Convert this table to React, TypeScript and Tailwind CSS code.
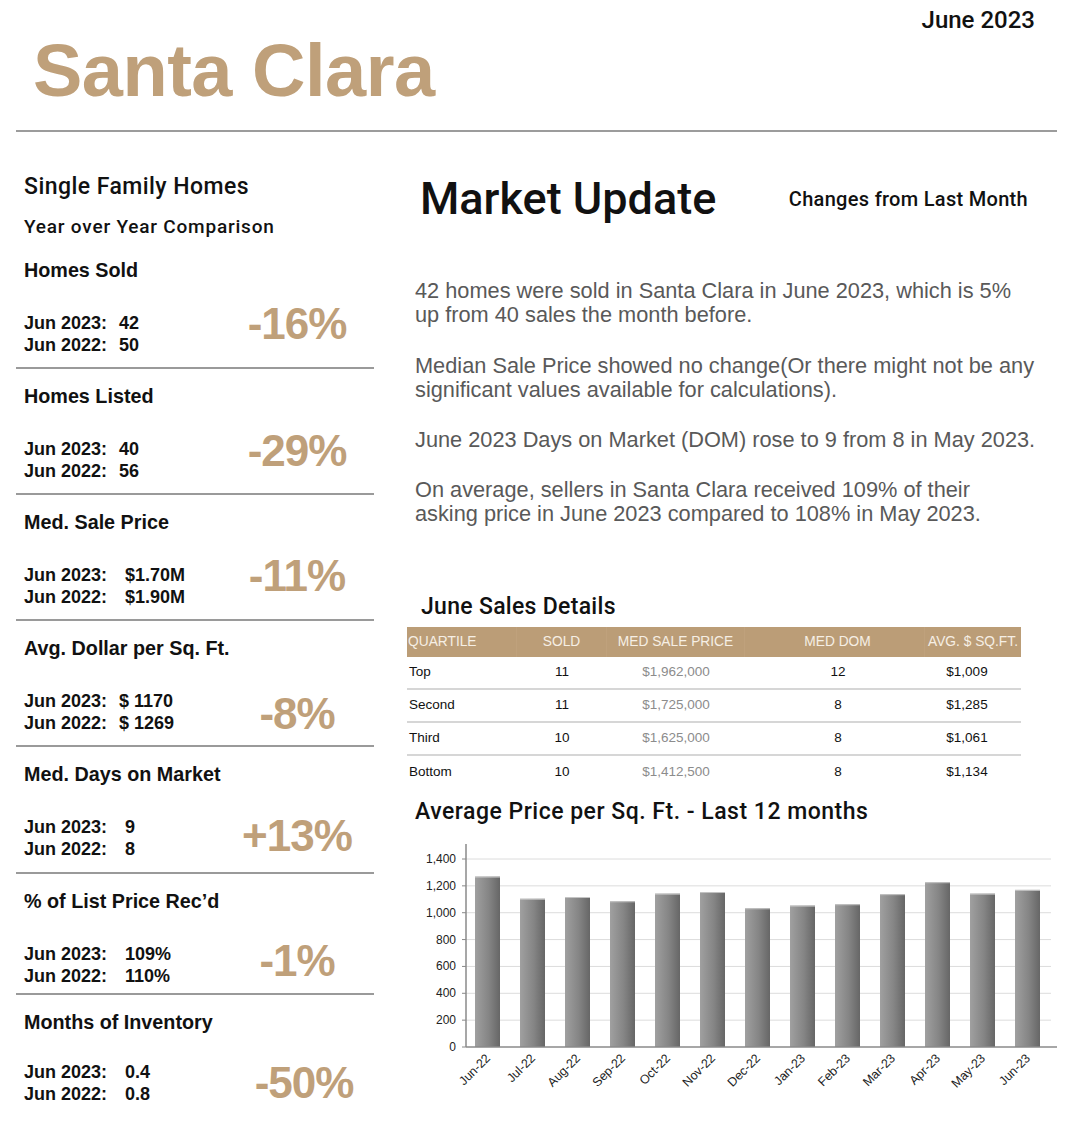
import React from 'react';

const tan = 'text-[#bfa07a]';

const stats = [
  { title: 'Homes Sold', a: '42', b: '50', pct: '-16%', wide: false, box: 'h-[126px] border-b-2', gap: 'mt-[29px]', shift: '-translate-y-[10px]' },
  { title: 'Homes Listed', a: '40', b: '56', pct: '-29%', wide: false, box: 'h-[126px] border-b-2', gap: 'mt-[29px]', shift: '-translate-y-[9px]' },
  { title: 'Med. Sale Price', a: '$1.70M', b: '$1.90M', pct: '-11%', wide: true, box: 'h-[126px] border-b-2', gap: 'mt-[29px]', shift: '-translate-y-[10px]' },
  { title: 'Avg. Dollar per Sq. Ft.', a: '$ 1170', b: '$ 1269', pct: '-8%', wide: false, box: 'h-[126px] border-b-2', gap: 'mt-[29px]', shift: 'translate-y-[2px]' },
  { title: 'Med. Days on Market', a: '9', b: '8', pct: '+13%', wide: true, box: 'h-[127px] border-b-2', gap: 'mt-[29px]', shift: '-translate-y-[2px]' },
  { title: '% of List Price Rec\u2019d', a: '109%', b: '110%', pct: '-1%', wide: true, box: 'h-[121px] border-b-2', gap: 'mt-[29px]', shift: '-translate-y-[4px]' },
  { title: 'Months of Inventory', a: '0.4', b: '0.8', pct: '-50%', wide: true, box: '', gap: 'mt-[26px]', shift: 'translate-x-[7px]' },
];

const quartiles = [
  { name: 'Top', sold: '11', price: '$1,962,000', dom: '12', sqft: '$1,009' },
  { name: 'Second', sold: '11', price: '$1,725,000', dom: '8', sqft: '$1,285' },
  { name: 'Third', sold: '10', price: '$1,625,000', dom: '8', sqft: '$1,061' },
  { name: 'Bottom', sold: '10', price: '$1,412,500', dom: '8', sqft: '$1,134' },
];

const months = ['Jun-22', 'Jul-22', 'Aug-22', 'Sep-22', 'Oct-22', 'Nov-22', 'Dec-22', 'Jan-23', 'Feb-23', 'Mar-23', 'Apr-23', 'May-23', 'Jun-23'];
const values = [1269, 1104, 1117, 1085, 1142, 1154, 1033, 1053, 1063, 1138, 1227, 1142, 1170];

const StatBlock = ({ s }: { s: (typeof stats)[number] }) => (
  <div className={`${s.box} border-[#9a9a9a] pl-[8px]`}>
    <div className="pt-[16px] text-[19.75px] leading-[22px] font-bold text-[#111]">{s.title}</div>
    <div className={`${s.gap} flex items-center`}>
      <div className="flex-1 text-[18px] leading-[22px] font-bold text-[#111]">
        <div className="flex">
          <span className="w-[95px]">Jun 2023:</span>
          <span className={s.wide ? 'pl-[6px] whitespace-pre' : 'whitespace-pre'}>{s.a}</span>
        </div>
        <div className="flex">
          <span className="w-[95px]">Jun 2022:</span>
          <span className={s.wide ? 'pl-[6px] whitespace-pre' : 'whitespace-pre'}>{s.b}</span>
        </div>
      </div>
      <div className={`mr-[12px] w-[130px] text-center text-[44px] leading-[48px] font-bold tracking-[-1px] ${tan} ${s.shift}`}>
        {s.pct}
      </div>
    </div>
  </div>
);

const PriceChart = () => {
  const zeroY = 206;
  const k = 188 / 1400;
  const left = 59;
  const right = 644;
  const slot = 45;
  return (
    <svg width="650" height="270" viewBox="0 0 650 270" className="block">
      <defs>
        <linearGradient id="barGrad" x1="0" y1="0" x2="1" y2="0">
          <stop offset="0%" stopColor="#a0a0a0" />
          <stop offset="55%" stopColor="#858585" />
          <stop offset="100%" stopColor="#666666" />
        </linearGradient>
      </defs>
      {[0, 200, 400, 600, 800, 1000, 1200, 1400].map((v) => {
        const y = zeroY - v * k;
        return (
          <g key={v}>
            {v > 0 && <line x1={left} x2={right} y1={y} y2={y} stroke="#dcdcdc" strokeWidth="1" />}
            <line x1={left - 4} x2={left} y1={y} y2={y} stroke="#888" strokeWidth="1" />
            <text
              x={49}
              y={y + 4}
              textAnchor="end"
              fontSize="12"
              fontFamily="'Liberation Sans', Arial, sans-serif"
              fill="#222"
            >
              {v.toLocaleString('en-US')}
            </text>
          </g>
        );
      })}
      {values.map((v, i) => {
        const h = v * k;
        const x = left + i * slot + 9;
        return (
          <g key={months[i]}>
            <rect x={x} y={zeroY - h} width="25" height={h} fill="url(#barGrad)" />
            <line x1={x} x2={x + 25} y1={zeroY - h + 0.5} y2={zeroY - h + 0.5} stroke="#c4c4c4" strokeWidth="1" />
            <text
              x={x + 16}
              y={zeroY + 12}
              textAnchor="end"
              fontSize="12.5"
              fontFamily="'Liberation Sans', Arial, sans-serif"
              fill="#222"
              transform={`rotate(-45 ${x + 16} ${zeroY + 12})`}
            >
              {months[i]}
            </text>
          </g>
        );
      })}
      <line x1={left} x2={left} y1={3} y2={zeroY} stroke="#8a8a8a" strokeWidth="1.5" />
      <line x1={left} x2={right + 6} y1={zeroY} y2={zeroY} stroke="#8a8a8a" strokeWidth="1.5" />
    </svg>
  );
};

const App = () => {
  return (
    <div className="w-[1080px] h-[1127px] bg-white overflow-hidden font-['Liberation_Sans',Arial,sans-serif] text-[#111]">
      {/* header */}
      <div className="px-[16px]">
        <div className="h-[34px] pt-[6px] pr-[29px] flex justify-end font-['Roboto',sans-serif] font-medium text-[24px] leading-[28px] text-[#111]">
          June 2023
        </div>
        <h1 className={`pl-[17px] text-[74px] leading-[74px] font-bold tracking-[-0.5px] ${tan}`}>Santa Clara</h1>
        <div className="mt-[22px] h-[2px] w-[1041px] bg-[#9c9c9c]" />
      </div>

      <div className="flex">
        {/* left column */}
        <div className="ml-[16px] w-[358px]">
          <div className="pt-[42px] pl-[8px] font-['Roboto',sans-serif] font-medium text-[23px] leading-[26px] tracking-[0.45px]">
            Single Family Homes
          </div>
          <div className="mt-[16px] pl-[8px] font-['Roboto',sans-serif] font-medium text-[19px] leading-[22px] tracking-[0.8px]">
            Year over Year Comparison
          </div>
          <div className="mt-[5px]">
            {stats.map((s) => (
              <StatBlock key={s.title} s={s} />
            ))}
          </div>
        </div>

        {/* right column */}
        <div className="ml-[33px] w-[650px]">
          <div className="mt-[41px] flex items-center pr-[29px]">
            <h2 className="ml-[13px] font-['Roboto',sans-serif] font-medium text-[45px] leading-[52px]">Market Update</h2>
            <div className="ml-auto font-['Roboto',sans-serif] font-medium text-[20px] leading-[24px] tracking-[0.3px]">
              Changes from Last Month
            </div>
          </div>

          <div className="mt-[54px] pl-[8px] text-[21.75px] leading-[24px] text-[#595959] whitespace-nowrap">
            <p>
              42 homes were sold in Santa Clara in June 2023, which is 5%
              <br />
              up from 40 sales the month before.
            </p>
            <p className="mt-[27px]">
              Median Sale Price showed no change(Or there might not be any
              <br />
              significant values available for calculations).
            </p>
            <p className="mt-[26px]">June 2023 Days on Market (DOM) rose to 9 from 8 in May 2023.</p>
            <p className="mt-[26px]">
              On average, sellers in Santa Clara received 109% of their
              <br />
              asking price in June 2023 compared to 108% in May 2023.
            </p>
          </div>

          <div className="mt-[68px] pl-[14px] font-['Roboto',sans-serif] font-medium text-[23px] leading-[26px] tracking-[0.3px]">
            June Sales Details
          </div>

          <div className="mt-[7px] w-[614px] text-[13.5px]">
            <div className="grid grid-cols-[110px_90px_138px_180px_96px] h-[30px] items-center bg-[#bb9d77] text-[#f6efe5] uppercase text-[13.75px]">
              <div className="pl-[1px] h-full flex items-center border-r border-[#bfa17c]">Quartile</div>
              <div className="text-center h-full flex items-center justify-center border-r border-[#bfa17c]">Sold</div>
              <div className="text-center h-full flex items-center justify-center border-r border-[#bfa17c]">Med Sale Price</div>
              <div className="text-center h-full flex items-center justify-center pl-[6px] border-r border-[#bfa17c]">Med DOM</div>
              <div className="text-center h-full flex items-center justify-center">Avg. $ Sq.Ft.</div>
            </div>
            {quartiles.map((q, i) => (
              <div
                key={q.name}
                className={
                  i < quartiles.length - 1
                    ? 'grid grid-cols-[110px_90px_138px_180px_96px] h-[33px] items-center border-b-2 border-[#d6d6d6]'
                    : 'grid grid-cols-[110px_90px_138px_180px_96px] h-[33px] items-center'
                }
              >
                <div className="pl-[2px]">{q.name}</div>
                <div className="text-center">{q.sold}</div>
                <div className="text-center text-[#8c8c8c]">{q.price}</div>
                <div className="text-center pl-[6px]">{q.dom}</div>
                <div className="text-center pr-[12px]">{q.sqft}</div>
              </div>
            ))}
          </div>

          <div className="mt-[9px] pl-[8px] font-['Roboto',sans-serif] font-medium text-[23px] leading-[27px] tracking-[0.5px]">
            Average Price per Sq. Ft. - Last 12 months
          </div>
          <div className="mt-[16px]">
            <PriceChart />
          </div>
        </div>
      </div>
    </div>
  );
};

export default App;
